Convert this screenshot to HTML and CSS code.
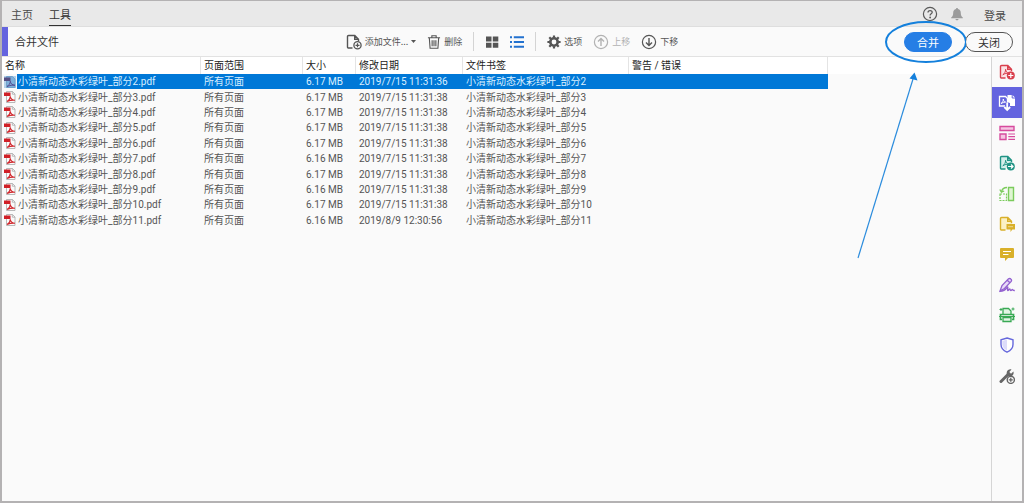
FILE: index.html
```html
<!DOCTYPE html>
<html lang="zh-CN">
<head>
<meta charset="utf-8">
<title>合并文件</title>
<link rel="stylesheet" href="styles.css">
</head>
<body>
<svg class="defs" aria-hidden="true">
  <symbol id="pdf" viewBox="0 0 12 12">
    <path d="M2.500.5h6l2.500 2.500V11.500h-8.500z" fill="#fafafa" stroke="#a8a8a8" stroke-width=".8"/>
    <path d="M8.300.5v2.700H11" fill="none" stroke="#a8a8a8" stroke-width=".8"/>
    <path d="M0 1.500h6.500v3.500H0z" fill="#d01f26"/>
    <path d="M3 10.500c1.800-1 3.300-3 3.300-5.300.3 2.600 1.800 3.800 4.700 4.100-2.600-.4-5 0-8 1.200z" fill="none" stroke="#d0262c" stroke-width="1.100"/>
  </symbol>
  <symbol id="doc" viewBox="0 0 16 16">
    <path d="M6.500 14H2.600A1.100 1.100 0 0 1 1.500 12.900V2.600A1.100 1.100 0 0 1 2.600 1.500h6.200L12.500 5.200v2M8.700 1.600v3.700h3.700" fill="var(--tint, none)" stroke="currentColor" stroke-width="1.400"/>
  </symbol>
  <symbol id="acro" viewBox="0 0 16 16">
    <path d="M3.800 10.800C5.500 9.700 6.600 7.800 6.600 5.300c.2 2.500 1.500 3.800 3.600 3.900-2.300-.2-4.300.3-6.400 1.600z" fill="none" stroke="currentColor"/>
  </symbol>
</svg>
<div class="app">
  <header class="topbar">
    <nav class="tabs">
      <a class="tab" href="#">主页</a>
      <a class="tab tab-active" href="#">工具</a>
    </nav>
    <div class="account">
      <button class="plain" aria-label="帮助">
        <svg class="i16" viewBox="0 0 16 16"><circle cx="8" cy="8" r="6.600" fill="none" stroke="#5a5a5a" stroke-width="1.200"/><path d="M6 6.500c0-2.600 4.200-2.500 4.200-.2 0 1.400-2.100 1.500-2.100 3.100" fill="none" stroke="#5a5a5a" stroke-width="1.300"/><circle cx="8.100" cy="11.500" r=".9" fill="#5a5a5a"/></svg>
      </button>
      <button class="plain" aria-label="通知">
        <svg class="i14" viewBox="0 0 14 14"><path d="M7 1c.7 0 1 .5 1 1 2 .5 2.800 2 2.800 4 0 2.500.7 3.500 2 4.500v.8H1.200v-.8c1.300-1 2-2 2-4.500 0-2 .8-3.500 2.800-4 0-.5.300-1 1-1zM5.400 12h3.200c-.2 1.700-3 1.700-3.200 0z" fill="#9b9b9b"/></svg>
      </button>
      <a class="login" href="#">登录</a>
    </div>
  </header>

  <div class="toolbar">
    <h1 class="title">合并文件</h1>
    <div class="tools">
      <button class="tool"><svg class="i16" viewBox="0 0 16 16"><use href="#doc"/><circle cx="11.500" cy="11.300" r="3.600" fill="#fafafa" stroke="currentColor" stroke-width="1.300"/><path d="M11.500 9.300v4M9.500 11.300h4" stroke="currentColor" stroke-width="1.200"/></svg><span>添加文件...</span><svg class="caret" viewBox="0 0 5 3"><path d="M0 0h5L2.500 3z" fill="currentColor"/></svg></button>
      <button class="tool"><svg class="i14" viewBox="0 0 14 15"><path d="M.5 3h13M4.700 2.800V.8h4.600v2M2 3.200l.8 11h8.400l.8-11M5 5.500v6.500M7 5.500v6.500M9 5.500v6.500" fill="none" stroke="currentColor" stroke-width="1.200"/></svg><span>删除</span></button>
      <span class="rule"></span>
      <button class="tool" aria-label="缩略图视图"><svg class="i14" viewBox="0 0 14 14"><path d="M1 1.500h5.500v5H1zM7.800 1.500h5.500v5H7.800zM1 7.800h5.500v5H1zM7.800 7.800h5.500v5H7.800z" fill="currentColor"/></svg></button>
      <button class="tool tool-on" aria-label="列表视图"><svg class="i14" viewBox="0 0 14 14"><path d="M0 1.200h2v2H0zM0 6h2v2H0zM0 10.800h2v2H0zM3.800 1.200H14v2H3.800zM3.800 6H14v2H3.800zM3.800 10.800H14v2H3.800z" fill="currentColor"/></svg></button>
      <span class="rule"></span>
      <button class="tool"><svg class="i14" viewBox="0 0 14 14"><circle cx="7" cy="7" r="3.700" fill="none" stroke="currentColor" stroke-width="2.600"/><path d="M7 .4v2.400M7 11.200v2.400M.4 7h2.400M11.200 7h2.400M2.300 2.300 4 4M10 10l1.700 1.700M2.300 11.700 4 10M10 4l1.700-1.700" stroke="currentColor" stroke-width="2.200"/></svg><span>选项</span></button>
      <button class="tool" disabled><svg class="i16" viewBox="0 0 16 16"><circle cx="8" cy="8" r="6.600" fill="none" stroke="currentColor" stroke-width="1.200"/><path d="M8 12V4.500M5 7.500l3-3 3 3" fill="none" stroke="currentColor" stroke-width="1.400"/></svg><span>上移</span></button>
      <button class="tool"><svg class="i16" viewBox="0 0 16 16"><circle cx="8" cy="8" r="6.600" fill="none" stroke="currentColor" stroke-width="1.200"/><path d="M8 4v7.500M5 8.500l3 3 3-3" fill="none" stroke="currentColor" stroke-width="1.400"/></svg><span>下移</span></button>
    </div>
    <div class="actions">
      <button class="pill pill-main">合并</button>
      <button class="pill">关闭</button>
      <svg class="callout" viewBox="0 0 110 240" aria-hidden="true"><ellipse cx="70" cy="21" rx="40" ry="20" fill="none" stroke="#1480dc" stroke-width="2"/><path d="M2 237 57 58" stroke="#2b8cdd" stroke-width="1.200"/><path d="M58.500 51.500 53.500 57.500l8 2z" fill="#1480dc"/></svg>
    </div>
  </div>

  <div class="body">
    <main class="list">
      <table class="files">
        <colgroup><col class="c-icon"><col class="c-name"><col class="c-range"><col class="c-size"><col class="c-date"><col class="c-mark"><col class="c-warn"></colgroup>
        <thead><tr><th colspan="2">名称</th><th>页面范围</th><th>大小</th><th>修改日期</th><th>文件书签</th><th>警告 / 错误</th></tr></thead>
        <tbody>
          <tr class="selected"><td><svg class="pdf" viewBox="0 0 12 12"><path d="M2.500.5h6L11 3v8.500H2.500z" fill="#8fb9dc" stroke="#5d8db5" stroke-width=".8"/><path d="M0 0h12v12H0z" fill="#6fa8d8" opacity=".5"/><path d="M0 1.500h6.500V5H0z" fill="#554d82"/><path d="M3 10.500c1.800-1 3.300-3 3.300-5.300.3 2.600 1.800 3.800 4.700 4.100-2.600-.4-5 0-8 1.200z" fill="none" stroke="#554d92"/></svg></td><td>小清新动态水彩绿叶_部分2.pdf</td><td>所有页面</td><td>6.17 MB</td><td>2019/7/15 11:31:36</td><td>小清新动态水彩绿叶_部分2</td><td></td></tr>
          <tr><td><svg class="pdf"><use href="#pdf"/></svg></td><td>小清新动态水彩绿叶_部分3.pdf</td><td>所有页面</td><td>6.17 MB</td><td>2019/7/15 11:31:38</td><td>小清新动态水彩绿叶_部分3</td><td></td></tr>
          <tr><td><svg class="pdf"><use href="#pdf"/></svg></td><td>小清新动态水彩绿叶_部分4.pdf</td><td>所有页面</td><td>6.17 MB</td><td>2019/7/15 11:31:38</td><td>小清新动态水彩绿叶_部分4</td><td></td></tr>
          <tr><td><svg class="pdf"><use href="#pdf"/></svg></td><td>小清新动态水彩绿叶_部分5.pdf</td><td>所有页面</td><td>6.17 MB</td><td>2019/7/15 11:31:38</td><td>小清新动态水彩绿叶_部分5</td><td></td></tr>
          <tr><td><svg class="pdf"><use href="#pdf"/></svg></td><td>小清新动态水彩绿叶_部分6.pdf</td><td>所有页面</td><td>6.17 MB</td><td>2019/7/15 11:31:38</td><td>小清新动态水彩绿叶_部分6</td><td></td></tr>
          <tr><td><svg class="pdf"><use href="#pdf"/></svg></td><td>小清新动态水彩绿叶_部分7.pdf</td><td>所有页面</td><td>6.16 MB</td><td>2019/7/15 11:31:38</td><td>小清新动态水彩绿叶_部分7</td><td></td></tr>
          <tr><td><svg class="pdf"><use href="#pdf"/></svg></td><td>小清新动态水彩绿叶_部分8.pdf</td><td>所有页面</td><td>6.17 MB</td><td>2019/7/15 11:31:38</td><td>小清新动态水彩绿叶_部分8</td><td></td></tr>
          <tr><td><svg class="pdf"><use href="#pdf"/></svg></td><td>小清新动态水彩绿叶_部分9.pdf</td><td>所有页面</td><td>6.16 MB</td><td>2019/7/15 11:31:38</td><td>小清新动态水彩绿叶_部分9</td><td></td></tr>
          <tr><td><svg class="pdf"><use href="#pdf"/></svg></td><td>小清新动态水彩绿叶_部分10.pdf</td><td>所有页面</td><td>6.17 MB</td><td>2019/7/15 11:31:38</td><td>小清新动态水彩绿叶_部分10</td><td></td></tr>
          <tr><td><svg class="pdf"><use href="#pdf"/></svg></td><td>小清新动态水彩绿叶_部分11.pdf</td><td>所有页面</td><td>6.16 MB</td><td>2019/8/9 12:30:56</td><td>小清新动态水彩绿叶_部分11</td><td></td></tr>
        </tbody>
      </table>
    </main>
    <aside class="side">
      <div class="side-list">
      <button class="side-btn red" aria-label="创建 PDF"><svg class="i16" viewBox="0 0 16 16"><use href="#doc"/><use href="#acro"/><circle cx="11.800" cy="11.500" r="4" fill="currentColor"/><path d="M11.800 9v5M9.300 11.500h5" stroke="#fff" stroke-width="1.200"/></svg></button>
      <button class="side-btn side-on" aria-label="合并文件"><svg class="i18" viewBox="0 0 18 18"><path d="M7 12H1.500V2.500h6l2 2V10" fill="none" stroke="#fff" stroke-width="1.300"/><path d="M3 9.500c1.500-.7 2.300-2.200 2.300-4.500.2 2 1 3.100 2.700 3.300-1.700 0-3.300.3-5 1.200z" fill="none" stroke="#fff"/><path d="M9.500 1h5L17 3.500v8.500h-5V9H9.500z" fill="#fff"/><path d="M14.200 1v3H17" fill="none" stroke="#6464df"/><path d="M9.200 8.500v7M6.300 13l2.900 3 2.900-3" fill="none" stroke="#6464df" stroke-width="4"/><path d="M9.200 8.500v7M6.300 13l2.900 3 2.900-3" fill="none" stroke="#fff" stroke-width="1.800"/></svg></button>
      <button class="side-btn pink" aria-label="组织页面"><svg class="i16" viewBox="0 0 16 16"><path d="M1 1.500h14v4H1zM1 9h6v5.500H1z" fill="var(--tint)" stroke="currentColor" stroke-width="1.400"/><path d="M9.300 9H16M9.300 11.700H16M9.300 14.400H16" stroke="currentColor" stroke-width="1.200"/></svg></button>
      <button class="side-btn teal" aria-label="导出 PDF"><svg class="i16" viewBox="0 0 16 16"><use href="#doc"/><use href="#acro"/><circle cx="11.800" cy="11.500" r="4" fill="currentColor"/><path d="M9 11.500h5M12 9.500l2 2-2 2" fill="none" stroke="#fff" stroke-width="1.200"/></svg></button>
      <button class="side-btn lime" aria-label="裁剪页面"><svg class="i16" viewBox="0 0 16 16"><path d="M9.500 1.500h5v13h-5z" fill="var(--tint)" stroke="currentColor" stroke-width="1.400"/><path d="M1 8v6.500h6.500V8z" fill="none" stroke="currentColor" stroke-width="1.200" stroke-dasharray="2 1"/><path d="M8 1.500C5 1.500 3 3 2.500 6M.8 3.500l1.600 2.700L5.200 5" fill="none" stroke="currentColor" stroke-width="1.300"/></svg></button>
      <button class="side-btn gold" aria-label="发送以供注释"><svg class="i16" viewBox="0 0 16 16"><use href="#doc"/><path d="M7.500 8H16v5.500h-2.700L11.500 16v-2.500h-4z" fill="currentColor"/><path d="M9.500 10.700h4.500" stroke="#fff" stroke-dasharray="1 1"/></svg></button>
      <button class="side-btn gold" aria-label="注释"><svg class="i16" viewBox="0 0 16 16"><path d="M2 2h12q1 0 1 1v8q0 1-1 1H9l-3 3v-3H2q-1 0-1-1V3q0-1 1-1z" fill="currentColor"/><path d="M4 5.500h8M4 8.500h5.500" stroke="#fff" stroke-width="1.200"/></svg></button>
      <button class="side-btn violet" aria-label="填写和签名"><svg class="i16" viewBox="0 0 16 16"><path d="M1 14 3 8.500l6.500-6.700q1.500-.8 2.500.4 1 1 .2 2.200L5.500 11.500zM8.500 3.500l2.700 2.500" fill="var(--tint)" stroke="currentColor" stroke-width="1.300"/><path d="M1 14.300c4 0 5.500-1.500 7.500-4.300 1 0-.5 3.500.3 3.600.8 0 1.300-1.700 2-1.600.6 0 .1 1.500 1 1.500s1-1 1.500-1 .5 1.200 2.500 1" fill="none" stroke="currentColor" stroke-width="1.300"/></svg></button>
      <button class="side-btn green" aria-label="扫描和 OCR"><svg class="i16" viewBox="0 0 16 16"><path d="M4 7V1.500h5.500L12 4v3" fill="var(--tint)" stroke="currentColor" stroke-width="1.300"/><path d="M3 12.500H1.500v-5h13v5H13" fill="none" stroke="currentColor" stroke-width="1.700"/><path d="M4 10.500h8v4H4z" fill="var(--tint)" stroke="currentColor" stroke-width="1.300"/><path d="M0 9.500h16M2 1v3M.5 2.500h3M14 .5v3M12.500 2h3" stroke="currentColor"/></svg></button>
      <button class="side-btn indigo" aria-label="保护"><svg class="i16" viewBox="0 0 16 16"><path d="M8 1 14 2.800V7.500q0 5-6 7.700-6-2.700-6-7.700V2.800z" fill="#fff" stroke="currentColor" stroke-width="1.400"/><path d="M8 2.500v11Q3.300 11 3.300 7.500V4z" fill="#dcdcfa"/></svg></button>
      <button class="side-btn grey" aria-label="更多工具"><svg class="i16" viewBox="0 0 16 16"><path d="M2 13.500 9 6.500" stroke="currentColor" stroke-width="3" stroke-linecap="round"/><path d="M12.500 1.500 10.300 4l1.700 1.700 2.400-2.200c1 3-1.400 5.200-3.800 4.700C8 7.800 7.300 6 7.800 4c.6-2 2.600-3 4.700-2.500z" fill="currentColor"/><circle cx="11.800" cy="11.800" r="3.600" fill="#fafafa" stroke="currentColor" stroke-width="1.400"/><path d="M11.800 9.800v4M9.800 11.800h4" stroke="currentColor" stroke-width="1.300"/></svg></button>
      </div>
    </aside>
  </div>
</div>
</body>
</html>
```
FILE: styles.css
```css
* { box-sizing: border-box; }

body {
  margin: 0;
  background: #b4b2b3;
  color: #4a4a4a;
  font-family: "Noto Sans CJK SC", sans-serif;
  font-size: 11px;
}

a { color: inherit; text-decoration: none; }

button {
  margin: 0;
  padding: 0;
  border: 0;
  background: none;
  color: inherit;
  font: inherit;
}

svg { display: block; flex: none; }

.defs { position: absolute; width: 0; height: 0; }
.i14 { width: 14px; height: 14px; }
.i16 { width: 16px; height: 16px; }
.i18 { width: 18px; height: 18px; }

.app {
  display: flex;
  flex-direction: column;
  min-height: 100vh;
  border: 2px solid #b4b2b3;
  border-top-width: 1px;
  background: #fafafa;
}

.topbar {
  display: flex;
  justify-content: space-between;
  height: 26px;
  padding: 0 16px 0 9px;
  border-bottom: 1px solid #dedede;
  background: #e9e9e9;
}

.tabs { display: flex; gap: 16px; }

.tab {
  height: 25px;
  padding-top: 2px;
  line-height: 22px;
}

.tab-active { border-bottom: 1px solid #333; color: #333; }

.account { display: flex; align-items: center; gap: 12px; }
.login { margin-left: 8px; padding-top: 2px; }

.toolbar {
  display: grid;
  grid-template-columns: 1fr auto 1fr;
  align-items: center;
  height: 30px;
  border-bottom: 1px solid #e2e2e2;
}

.title {
  align-self: stretch;
  margin: 0;
  padding-left: 7px;
  border-left: 6px solid #6464df;
  color: #333;
  font-size: 11px;
  font-weight: 400;
  line-height: 29px;
}

.tools {
  display: flex;
  align-items: center;
  gap: 11px;
  font-size: 9px;
}

.tool { display: flex; align-items: center; gap: 3px; color: #555; }
.tool:disabled { color: #b2b2b2; }
.tool-on { color: #2372cf; }
.caret { width: 5px; height: 3px; }
.rule { width: 1px; height: 19px; background: #d4d4d4; }

.actions {
  position: relative;
  display: flex;
  justify-content: flex-end;
  gap: 13px;
  padding-right: 9px;
}

.pill {
  width: 48px;
  height: 20px;
  border: 1px solid #555;
  border-radius: 10px;
  color: #333;
  line-height: 16px;
}

.pill-main { border-color: #267ee5; background: #267ee5; color: #fff; }

.callout {
  position: absolute;
  top: -11px;
  right: 56px;
  width: 110px;
  height: 240px;
  pointer-events: none;
}

.body { display: flex; flex: 1; }

.list {
  flex: 1;
  min-width: 0;
  background: linear-gradient(#fff 17px, #fafafa 17px);
}

.files {
  width: 826px;
  height: 171px;
  border-collapse: separate;
  border-spacing: 0;
  table-layout: fixed;
  font-family: Roboto, "Noto Sans CJK SC", sans-serif;
  font-size: 10px;
  line-height: 15px;
  text-align: left;
  white-space: nowrap;
}

.c-icon { width: 15px; }
.c-name { width: 184px; }
.c-range { width: 102px; }
.c-size { width: 53px; }
.c-date { width: 107px; }
.c-mark { width: 166px; }
.c-warn { width: 199px; }

.files th {
  height: 17px;
  padding: 0 3px;
  border-right: 1px solid #e4e4e4;
  color: #222;
  font-weight: 400;
}

.files td { padding: 0 3px; color: #555; }
.files td:first-child { padding: 0 2px; }
.files td:nth-child(2) { padding: 0 1px; }
.selected td:not(:first-child) { background: #0078d7; color: #d9efff; }
.pdf { width: 12px; height: 12px; }

.side {
  width: 31px;
  border-left: 1px solid #d5d5d5;
}

.side-list {
  display: grid;
  grid-auto-rows: 1fr;
  height: 334px;
}

.side-btn {
  display: flex;
  align-items: center;
  justify-content: center;
}

.side-on { background: #6464df; }
.red { --tint: #fbe3e5; color: #d9404d; }
.pink { --tint: #f5c5e2; color: #d64a9d; }
.teal { --tint: #d5eeeb; color: #219485; }
.lime { --tint: #dff5d2; color: #7bcb5c; }
.gold { --tint: #fbf0c4; color: #d9b02a; }
.violet { --tint: #e8daf8; color: #9260cf; }
.green { --tint: #e2f5e4; color: #38a954; }
.indigo { color: #6668dc; }
.grey { color: #666; }
```
